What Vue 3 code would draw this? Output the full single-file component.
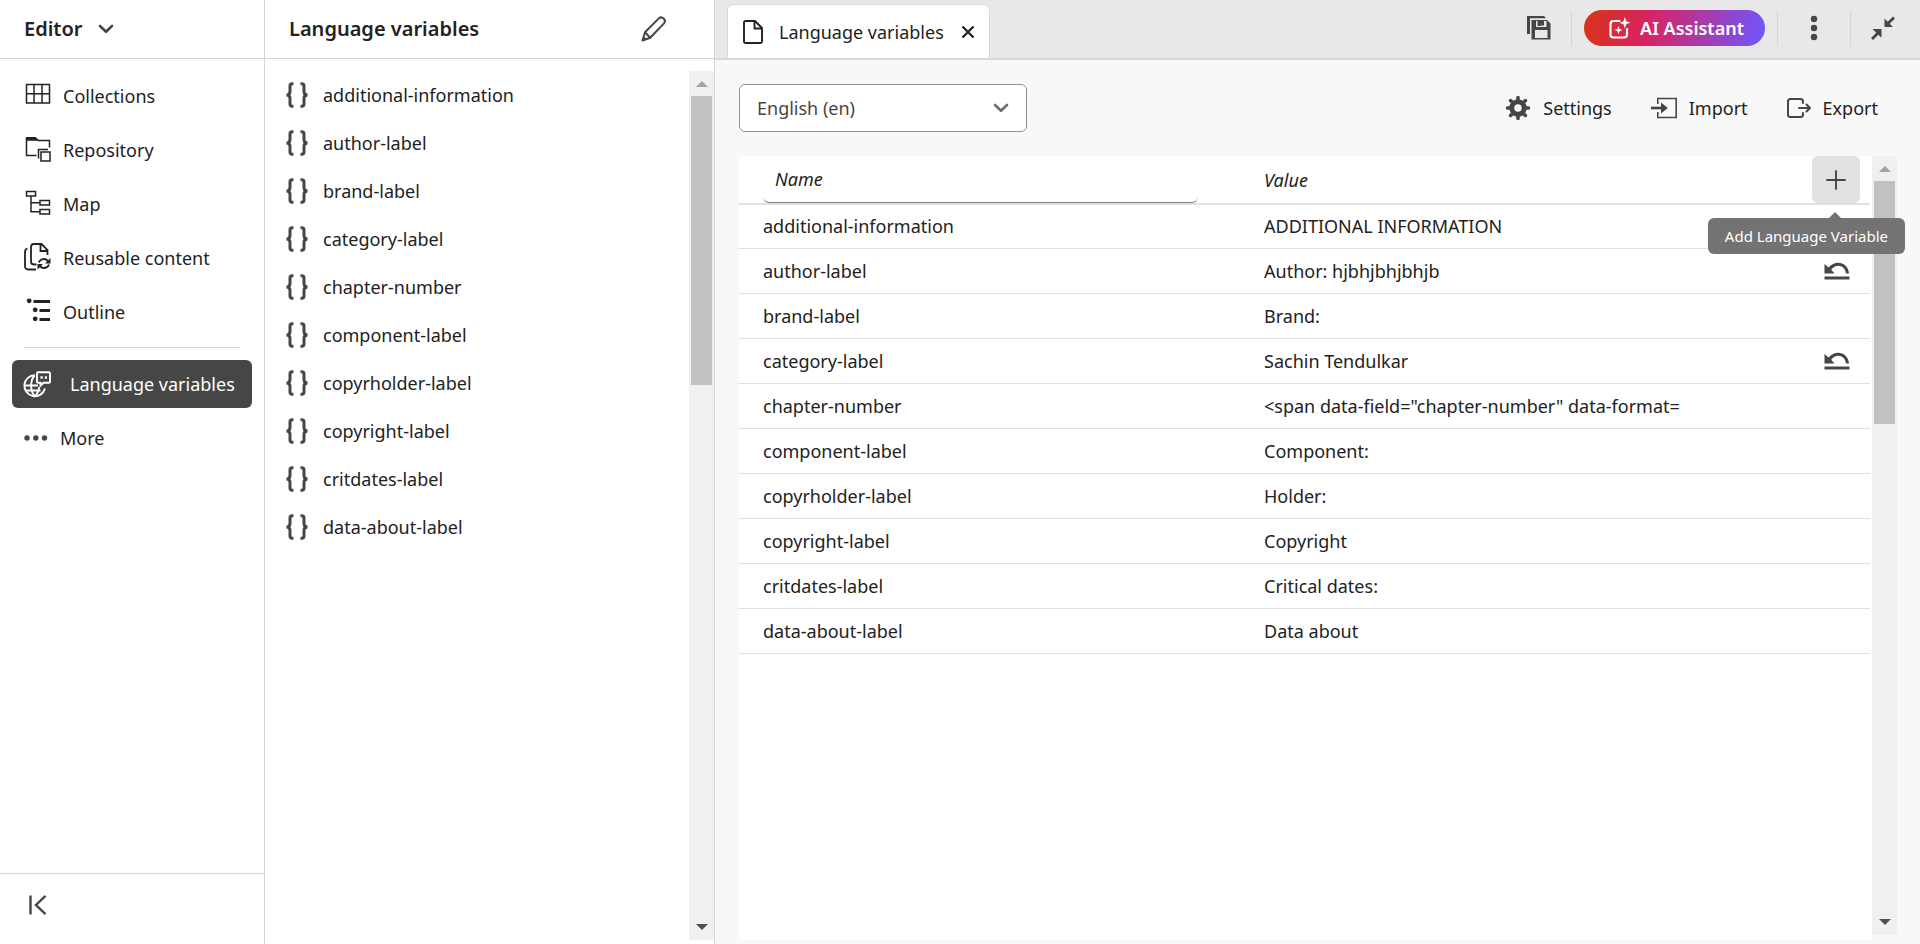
<script setup>
import { ref } from 'vue'

const navItems = [
  {
    label: 'Collections',
    icon: '<path d="M2.5 2.5h23v18.5h-23zM10 2.5v18.5M18 2.5v18.5M2.5 11.8h23"/>',
  },
  {
    label: 'Repository',
    icon: '<path d="M12.5 19.5H2.500V2.500H12l2.500 2H25.500V11.500M14.500 22.500V13.500H24"/><path class="solid" d="M2 1h9.500l3 3.800H2z"/><path d="M17 16h9v9h-9z"/>',
  },
  {
    label: 'Map',
    icon: '<path d="M2.500 1.500h9v4.500h-9zM16 10.500h9.500v4.500H16zM16 19.500h9.500V24H16zM7 6v15.800h9M7 12.800h9"/>',
  },
  {
    label: 'Reusable content',
    icon: '<g stroke-width="1.800"><path d="M3.500 4.500C1.500 5 1 6 1 8v14c0 2.500 1 3.500 3.500 3.500H12"/><path d="M12.500 20.500H10c-2 0-3-1-3-3V3c0-2 1-3 3-3h7.500l6 6v5M16.500 0v7h7"/><path d="M14.800 18.500c1.500-4.500 7.500-4.500 9.500-.8M25 20.500c-1.500 4.500-7.500 4.500-9.500 1"/></g><path class="solid" d="M26.500 14v5.500H21zM13.500 25.500V20H19z"/>',
  },
  {
    label: 'Outline',
    icon: '<path stroke-width="2.800" d="M9.500 3.500h16.500M15.500 12.500H26M15.500 21.500H26"/><g class="solid"><circle cx="5.200" cy="2.800" r="2.400"/><circle cx="11.200" cy="11.800" r="2.400"/><circle cx="11.200" cy="20.800" r="2.400"/></g>',
  },
]

const rows = [
  { name: 'additional-information', value: 'ADDITIONAL INFORMATION' },
  { name: 'author-label', value: 'Author: hjbhjbhjbhjb', edited: true },
  { name: 'brand-label', value: 'Brand:' },
  { name: 'category-label', value: 'Sachin Tendulkar', edited: true },
  { name: 'chapter-number', value: '<span data-field="chapter-number" data-format=' },
  { name: 'component-label', value: 'Component:' },
  { name: 'copyrholder-label', value: 'Holder:' },
  { name: 'copyright-label', value: 'Copyright' },
  { name: 'critdates-label', value: 'Critical dates:' },
  { name: 'data-about-label', value: 'Data about' },
]

const language = ref('en')
const nameFilter = ref('')
</script>

<template>
  <div class="app">
    <aside class="sidebar">
      <header class="side-head">
        <button class="plain mode" type="button">
          Editor
          <svg class="line" width="16" height="10" viewBox="0 0 16 10"><path stroke-width="2.600" stroke-linecap="round" stroke-linejoin="round" d="M2 2l6 5.800L14 2" /></svg>
        </button>
      </header>
      <nav class="nav">
        <a v-for="item in navItems" :key="item.label" class="nav-item" href="#">
          <svg class="line dark" width="28" height="28" viewBox="0 0 28 28" v-html="item.icon"></svg>
          {{ item.label }}
        </a>
        <hr class="divider" />
        <a class="nav-item active" href="#" aria-current="page">
          <svg class="line" width="28" height="28" viewBox="0 0 28 28">
            <g stroke-width="1.900">
              <path d="M11 5.200A10.500 10.500 0 1 0 21 18.500" />
              <path d="M10.500 5.500c-4.500 5-4.500 15 0 20.500M11 26c3-3 4-6 4.200-9M1 15.500h13M2.500 20.500h14" />
              <path d="M14 2.200h11c.6 0 1 .4 1 1v8.600c0 .6-.4 1-1 1h-5.500l-3 3v-3H14c-.6 0-1-.4-1-1V3.200c0-.6.4-1 1-1z" />
            </g>
            <path class="solid" d="M16.500 6.200h2.200v2.600h-2.200zM20.800 6.200H23v2.600h-2.200z" />
          </svg>
          Language variables
        </a>
        <a class="nav-item more" href="#">
          <svg class="fill" width="28" height="28" viewBox="0 0 28 28"><circle cx="3" cy="14" r="2.700" /><circle cx="11.800" cy="14" r="2.700" /><circle cx="20.500" cy="14" r="2.700" /></svg>
          More
        </a>
      </nav>
      <footer class="side-foot">
        <button class="plain" type="button" aria-label="Collapse sidebar">
          <svg class="line" width="20" height="20" viewBox="0 0 20 20"><path stroke-width="2.400" d="M2.500 .5v19M17.500 .8L8 10l9.500 9.200" /></svg>
        </button>
      </footer>
    </aside>

    <section class="panel">
      <header class="panel-head">
        <h2>Language variables</h2>
        <button class="plain" type="button" aria-label="Edit">
          <svg class="line" width="26" height="26" viewBox="0 0 26 26"><path stroke-width="2" stroke-linejoin="round" d="M1.500 24.500L4 16.200 17.800 2.400c3.200-3 8 1.800 5.200 5L9.200 21.800zM4 16.200l5.200 5.600" /><path class="solid" d="M1 25l1.500-5 3.500 3.500z" /></svg>
        </button>
      </header>
      <div class="panel-body">
        <ul class="var-list">
          <li v-for="row in rows" :key="row.name">
            <svg class="line" width="24" height="26" viewBox="0 0 24 26"><path stroke-width="3" d="M8.500 1.800H7.200Q5 1.800 5 4v5.500Q5 13 1.500 13 5 13 5 16.500V22q0 2.200 2.200 2.200h1.300M15.500 1.800h1.300Q19 1.800 19 4v5.500q0 3.500 3.500 3.500-3.500 0-3.500 3.500V22q0 2.200-2.200 2.200h-1.300" /></svg>
            {{ row.name }}
          </li>
        </ul>
        <div class="scrollbar list-bar">
          <i class="arrow up"></i>
          <i class="thumb"></i>
          <i class="arrow down"></i>
        </div>
      </div>
    </section>

    <main class="main">
      <header class="tabs">
        <div class="tab">
          <svg class="line dark" width="20" height="24" viewBox="0 0 20 24"><path stroke-width="1.900" stroke-linejoin="round" d="M2.500 1H12l7 7v13.500c0 1-.5 1.500-1.500 1.500h-15C1.500 23 1 22.500 1 21.500v-19C1 1.500 1.500 1 2.500 1zM11.500 1v7.500H19" /></svg>
          <span>Language variables</span>
          <button class="plain" type="button" aria-label="Close tab">
            <svg class="line dark" width="14" height="14" viewBox="0 0 14 14"><path stroke-width="2.300" d="M1.500 1.500l11 11M12.500 1.500l-11 11" /></svg>
          </button>
        </div>
        <div class="actions">
          <button class="plain save" type="button" aria-label="Save all">
            <svg class="fill" width="24" height="24" viewBox="0 0 24 24"><path d="M0 0h17l2 2.200H3V18H0z" /><path fill-rule="evenodd" d="M4.500 4h15.500l3.500 3.500v16h-19zM9 5v6h10.500V5zM8 14v8h12.500v-8z" /><path d="M10.500 5H14v5h-3.500zM14 4.500h3v5h-3z" /></svg>
          </button>
          <span class="sep"></span>
          <button class="ai" type="button">
            <svg class="line" width="22" height="22" viewBox="0 0 22 22"><path stroke-width="2.200" stroke-linecap="round" d="M10.500 4H4.500Q1.500 4 1.500 7v10.500q0 3 3 3H15q3 0 3-3V12" /><path class="solid" d="M15.800 0l1.400 4.300L21.500 5.500l-4.200 1.700-1.600 4.300-1.200-4.300L10.500 6l4-1.700zM9.500 9l1 3 3 1-3 1.200-1 3-1-3-3-1.200 3-1z" /></svg>
            AI Assistant
          </button>
          <span class="sep"></span>
          <button class="plain dots" type="button" aria-label="More actions">
            <svg class="fill" width="8" height="26" viewBox="0 0 8 26"><circle cx="4" cy="4" r="3.200" /><circle cx="4" cy="13" r="3.200" /><circle cx="4" cy="22" r="3.200" /></svg>
          </button>
          <span class="sep"></span>
          <button class="plain shrink" type="button" aria-label="Exit full screen">
            <svg class="fill" width="24" height="24" viewBox="0 0 24 24"><path d="M13.500 2.500v8.500h8.500L18.700 7.800 24 2.500 22 .5l-5.300 5.200zM1.500 13h9v8.800L7.300 18.700 2 24l-2-2 5.300-5.300z" /></svg>
          </button>
        </div>
      </header>

      <div class="toolbar">
        <div class="select">
          <select v-model="language" aria-label="Language">
            <option value="en">English (en)</option>
          </select>
          <svg class="line" width="16" height="10" viewBox="0 0 16 10"><path stroke-width="2.600" stroke-linecap="round" stroke-linejoin="round" d="M2 2l6 5.800L14 2" /></svg>
        </div>
        <div class="tools">
          <button class="plain tool" type="button">
            <svg class="line" width="26" height="26" viewBox="0 0 26 26"><circle cx="13" cy="13" r="6.200" stroke-width="5" /><path stroke-width="3.600" stroke-linecap="round" d="M13 2.500V5M13 21v2.500M2.500 13H5M21 13h2.500M5.600 5.600l1.700 1.700M18.700 18.700l1.700 1.700M5.600 20.400l1.700-1.700M18.700 7.300l1.700-1.700" /></svg>
            Settings
          </button>
          <button class="plain tool" type="button">
            <svg class="line" width="26" height="22" viewBox="0 0 26 22"><path stroke-width="1.600" d="M6.800 7V1.500h18.400v19H6.800V15" /><path stroke-width="2.600" d="M0 11h11" /><path class="solid" d="M10 5.500l6.800 5.500-6.800 5.500z" /></svg>
            Import
          </button>
          <button class="plain tool" type="button">
            <svg class="line" width="24" height="20" viewBox="0 0 24 20"><path stroke-width="2" stroke-linecap="round" stroke-linejoin="round" d="M16 5V3.500Q16 1 13.500 1h-10Q1 1 1 3.500v13Q1 19 3.500 19h10q2.500 0 2.500-2.500V15M12 10h11M19.500 6.500L23 10l-3.500 3.500" /></svg>
            Export
          </button>
        </div>
      </div>

      <div class="content">
        <div class="table-wrap">
          <table>
            <colgroup>
              <col class="col-name" />
              <col />
              <col class="col-act" />
            </colgroup>
            <thead>
              <tr>
                <th scope="col"><input v-model="nameFilter" type="text" placeholder="Name" aria-label="Name" /></th>
                <th scope="col">Value</th>
                <th scope="col" class="act">
                  <div class="add-wrap">
                    <button class="add" type="button" aria-describedby="add-tip" aria-label="Add Language Variable">
                      <svg class="line" width="20" height="20" viewBox="0 0 20 20"><path stroke-width="1.900" stroke-linecap="round" d="M10 1v18M1 10h18" /></svg>
                    </button>
                    <div id="add-tip" class="tooltip" role="tooltip">Add Language Variable</div>
                  </div>
                </th>
              </tr>
            </thead>
            <tbody>
              <tr v-for="row in rows" :key="row.name">
                <td>{{ row.name }}</td>
                <td>{{ row.value }}</td>
                <td class="act">
                  <button v-if="row.edited" class="plain undo" type="button" aria-label="Revert">
                    <svg class="fill" width="26" height="18" viewBox="0 0 26 18"><path d="M.5 14.500h25v3H.5zM.5 2l4 3.500C11-2.500 24-.5 25 11.500h-3C21 3 12 1 7.200 7.800L10.500 11.500H.5z" /></svg>
                  </button>
                </td>
              </tr>
            </tbody>
          </table>
        </div>
        <div class="scrollbar table-bar">
          <i class="arrow up"></i>
          <i class="thumb"></i>
          <i class="arrow down"></i>
        </div>
      </div>
    </main>
  </div>
</template>

<style>
body {
  margin: 0;
}
</style>

<style scoped>
* {
  box-sizing: border-box;
}
.app {
  display: flex;
  height: 100vh;
  overflow: hidden;
  background: #fff;
  color: #222;
  font: 18px/24px "Noto Sans", "Open Sans", sans-serif;
}
svg {
  display: block;
  flex: none;
  overflow: visible;
}
.line {
  fill: none;
  stroke: currentColor;
  stroke-width: 1.5;
}
.fill,
.line :deep(.solid) {
  fill: currentColor;
  stroke: none;
}
.dark {
  color: #222;
}
button,
input,
select {
  font: inherit;
  color: inherit;
}
.plain {
  display: flex;
  align-items: center;
  padding: 0;
  border: 0;
  background: none;
}
.plain svg {
  color: #464646;
}
.plain svg.dark {
  color: #222;
}

.sidebar {
  display: flex;
  flex: none;
  flex-direction: column;
  width: 265px;
  border-right: 1px solid #d5d5d5;
}
.side-head,
.panel-head {
  display: flex;
  flex: none;
  align-items: center;
  height: 59px;
  border-bottom: 1px solid #d5d5d5;
}
.side-head {
  padding-left: 24px;
}
.mode {
  gap: 16px;
  font-size: 20px;
  font-weight: 600;
}
.nav {
  display: flex;
  flex: 1;
  flex-direction: column;
  padding: 10px 12px;
}
.nav-item {
  display: flex;
  align-items: center;
  gap: 11px;
  height: 48px;
  margin-bottom: 6px;
  padding: 0 12px;
  border-radius: 6px;
  color: #222;
  text-decoration: none;
  white-space: nowrap;
}
.nav > .nav-item:first-child {
  margin-top: 3px;
}
.divider {
  width: 216px;
  height: 1px;
  margin: 5px 12px 12px;
  border: 0;
  background: #d5d5d5;
}
.active {
  gap: 18px;
  background: #464646;
  color: #fff;
}
.more {
  gap: 8px;
}
.more svg {
  color: #464646;
}
.side-foot {
  display: flex;
  flex: none;
  align-items: center;
  height: 71px;
  padding: 0 28px 8px;
  border-top: 1px solid #d5d5d5;
}

.panel {
  display: flex;
  flex: none;
  flex-direction: column;
  width: 450px;
  border-right: 1px solid #d5d5d5;
}
.panel-head {
  justify-content: space-between;
  padding: 0 47px 0 24px;
}
h2 {
  margin: 0;
  font-size: 20px;
  font-weight: 600;
}
.panel-body {
  display: flex;
  flex: 1;
  padding: 12px 0 4px;
}
.var-list {
  flex: 1;
  margin: 0;
  padding: 0 0 0 20px;
  list-style: none;
}
.var-list li {
  display: flex;
  align-items: center;
  gap: 14px;
  height: 48px;
}
.var-list svg {
  color: #464646;
}

.scrollbar {
  display: flex;
  flex: none;
  flex-direction: column;
  align-items: center;
  width: 25px;
  padding: 10px 0;
  background: #f0f0f0;
}
.arrow {
  border: 6px solid transparent;
}
.up {
  border-top: 0;
  border-bottom-color: #a3a3a3;
}
.down {
  margin-top: auto;
  border-bottom: 0;
  border-top-color: #505050;
}
.thumb {
  width: 21px;
  margin-top: 9px;
  background: #c1c1c1;
}
.list-bar .thumb {
  height: 34%;
}
.table-bar .thumb {
  height: 32%;
}

.main {
  display: flex;
  flex: 1;
  flex-direction: column;
  min-width: 0;
  background: #f8f8f8;
}
.tabs {
  display: flex;
  flex: none;
  justify-content: space-between;
  height: 60px;
  border-bottom: 2px solid #d8d8d8;
  background: #e8e8e8;
}
.tab {
  display: flex;
  align-items: center;
  margin: 4px 0 0 12px;
  padding: 0 14px 0 15px;
  border: 1px solid #d8d8d8;
  border-bottom: 0;
  border-radius: 6px 6px 0 0;
  background: #fff;
}
.tab span {
  margin: 0 17px 0 16px;
}
.actions {
  display: flex;
  align-items: center;
  padding: 0 25px 2px 0;
}
.sep {
  width: 1px;
  height: 35px;
  background: #d5d5d5;
}
.save {
  margin-right: 20px;
}
.ai {
  display: flex;
  align-items: center;
  gap: 9px;
  height: 36px;
  margin: 0 12px;
  padding: 0 21px 0 25px;
  border: 0;
  border-radius: 18px;
  background: linear-gradient(100deg, #d73220 5%, #d92361 35%, #7155fa 98%);
  color: #fff;
  font-weight: 600;
}
.dots {
  margin: 0 32px;
}
.shrink {
  margin-left: 20px;
}

.toolbar {
  display: flex;
  flex: none;
  align-items: center;
  justify-content: space-between;
  padding: 24px 42px 24px 24px;
}
.select {
  position: relative;
  width: 288px;
  color: #464646;
}
.select select {
  width: 100%;
  height: 48px;
  padding: 0 48px 0 17px;
  border: 1px solid #909090;
  border-radius: 6px;
  appearance: none;
  background: #fff;
}
.select svg {
  position: absolute;
  top: 19px;
  right: 18px;
  color: #6e6e6e;
  pointer-events: none;
}
.tools {
  display: flex;
  gap: 39px;
}
.tool {
  gap: 12px;
}

.content {
  display: flex;
  flex: 1;
  min-height: 0;
  padding: 0 23px 4px 24px;
}
.table-wrap {
  flex: 1;
  min-width: 0;
  padding-right: 2px;
  background: #fff;
}
.table-bar {
  margin-bottom: 5px;
}
table {
  width: 100%;
  border-collapse: collapse;
  table-layout: fixed;
}
.col-name {
  width: 44.3%;
}
.col-act {
  width: 82px;
}
th,
td {
  height: 45px;
  padding: 0 0 0 24px;
  border-bottom: 1px solid #e0e0e0;
  text-align: left;
  white-space: nowrap;
}
tbody tr:first-child td {
  height: 44px;
}
th {
  height: 48px;
  border-bottom-width: 2px;
  font-style: italic;
  font-weight: 400;
}
th input {
  display: block;
  width: calc(100% - 42px);
  height: 47px;
  padding: 0 12px;
  border: 0;
  border-bottom: 1px solid #808080;
  border-radius: 6px;
  outline: 0;
  background: transparent;
  font-style: italic;
}
th input::placeholder {
  color: #222;
  opacity: 1;
}
.act .undo {
  padding: 0 0 0 12px;
}
.add-wrap {
  position: relative;
  width: 48px;
}
.add {
  display: flex;
  align-items: center;
  justify-content: center;
  width: 48px;
  height: 47px;
  padding: 0;
  border: 0;
  border-radius: 6px;
  background: #e1e1e1;
  color: #464646;
}
.tooltip {
  position: absolute;
  top: 62px;
  right: -45px;
  z-index: 1;
  padding: 6px 17px;
  border-radius: 6px;
  background: #737373;
  color: #fff;
  font-size: 15px;
  font-style: normal;
}
.tooltip::before {
  content: "";
  position: absolute;
  top: -6px;
  right: 64px;
  border: 6px solid transparent;
  border-top: 0;
  border-bottom-color: #737373;
}
</style>
